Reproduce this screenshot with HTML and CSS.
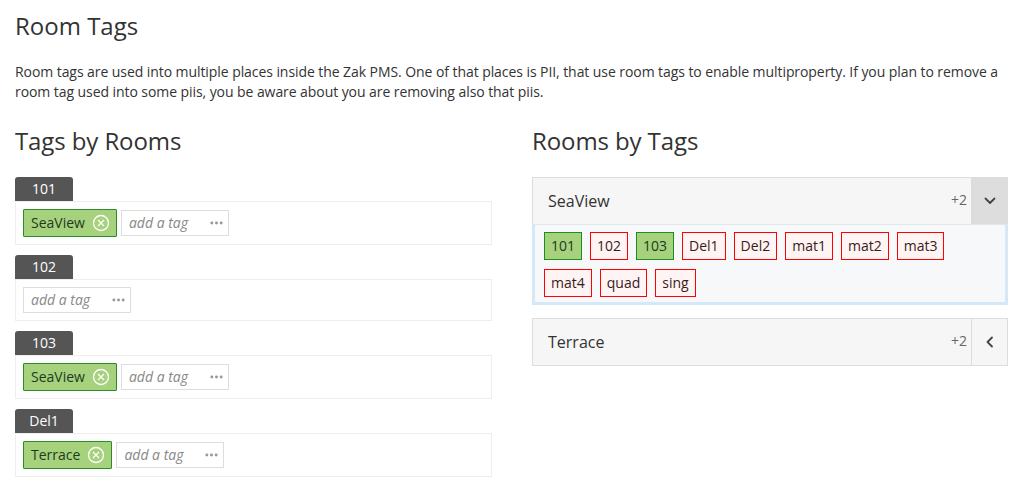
FILE: index.html
```html
<!DOCTYPE html>
<html>
<head>
<meta charset="utf-8">
<link rel="stylesheet" href="styles.css">
</head>
<body>
<div class="page">
  <h1 class="title">Room Tags</h1>
  <p class="intro">Room tags are used into multiple places inside the Zak PMS. One of that places is PII, that use room tags to enable multiproperty. If you plan to remove a room tag used into some piis, you be aware about you are removing also that piis.</p>
  <div class="cols">
    <section class="col">
      <h2 class="subtitle">Tags by Rooms</h2>
      <div class="room">
        <div class="room-label">101</div>
        <div class="room-row">
          <span class="tag">SeaView<svg class="x" viewBox="0 0 18 18"><circle cx="9" cy="9" r="7.5"/><path d="M6 6l6 6M12 6l-6 6"/></svg></span>
          <span class="add"><span class="ph">add a tag</span><svg class="dots" viewBox="0 0 14 4"><circle cx="2" cy="2" r="1.6"/><circle cx="7" cy="2" r="1.6"/><circle cx="12" cy="2" r="1.6"/></svg></span>
        </div>
      </div>
      <div class="room">
        <div class="room-label">102</div>
        <div class="room-row">
          <span class="add"><span class="ph">add a tag</span><svg class="dots" viewBox="0 0 14 4"><circle cx="2" cy="2" r="1.6"/><circle cx="7" cy="2" r="1.6"/><circle cx="12" cy="2" r="1.6"/></svg></span>
        </div>
      </div>
      <div class="room">
        <div class="room-label">103</div>
        <div class="room-row">
          <span class="tag">SeaView<svg class="x" viewBox="0 0 18 18"><circle cx="9" cy="9" r="7.5"/><path d="M6 6l6 6M12 6l-6 6"/></svg></span>
          <span class="add"><span class="ph">add a tag</span><svg class="dots" viewBox="0 0 14 4"><circle cx="2" cy="2" r="1.6"/><circle cx="7" cy="2" r="1.6"/><circle cx="12" cy="2" r="1.6"/></svg></span>
        </div>
      </div>
      <div class="room">
        <div class="room-label">Del1</div>
        <div class="room-row">
          <span class="tag">Terrace<svg class="x" viewBox="0 0 18 18"><circle cx="9" cy="9" r="7.5"/><path d="M6 6l6 6M12 6l-6 6"/></svg></span>
          <span class="add"><span class="ph">add a tag</span><svg class="dots" viewBox="0 0 14 4"><circle cx="2" cy="2" r="1.6"/><circle cx="7" cy="2" r="1.6"/><circle cx="12" cy="2" r="1.6"/></svg></span>
        </div>
      </div>
    </section>
    <section class="col">
      <h2 class="subtitle">Rooms by Tags</h2>
      <div class="panel open">
        <div class="panel-head">
          <span class="panel-name">SeaView</span>
          <span class="count">+2</span>
          <span class="toggle active"><svg viewBox="0 0 12 8"><path d="M1.5 1.5l4.5 4.5 4.5-4.5"/></svg></span>
        </div>
        <div class="panel-body">
          <span class="rt on">101</span>
          <span class="rt">102</span>
          <span class="rt on">103</span>
          <span class="rt">Del1</span>
          <span class="rt">Del2</span>
          <span class="rt">mat1</span>
          <span class="rt">mat2</span>
          <span class="rt">mat3</span>
          <span class="rt">mat4</span>
          <span class="rt">quad</span>
          <span class="rt">sing</span>
        </div>
      </div>
      <div class="panel">
        <div class="panel-head">
          <span class="panel-name">Terrace</span>
          <span class="count">+2</span>
          <span class="toggle"><svg viewBox="0 0 8 12"><path d="M6 1.5l-4.5 4.5 4.5 4.5"/></svg></span>
        </div>
      </div>
    </section>
  </div>
</div>
</body>
</html>
```
FILE: styles.css
```css
* { box-sizing: border-box; }
html, body { margin: 0; padding: 0; background: #fff; }
body {
  font-family: "Open Sans", "Liberation Sans", sans-serif;
  font-size: 14px;
  line-height: 20px;
  color: #333;
}
.page { padding: 0 12px 0 15px; }
.title {
  font-size: 24px;
  font-weight: 400;
  line-height: 26px;
  margin: 13px 0 23px;
}
.intro { margin: 0 0 26px; letter-spacing: -0.07px; }
.cols {
  display: grid;
  grid-template-columns: 477px 476px;
  column-gap: 40px;
}
.subtitle {
  font-size: 24px;
  font-weight: 400;
  line-height: 26px;
  margin: 0 0 23px;
  letter-spacing: -0.1px;
}
.room { margin-bottom: 10px; }
.room-label {
  width: 58px;
  height: 24px;
  line-height: 23px;
  background: #555;
  color: #fff;
  text-align: center;
  border-radius: 3px 3px 0 0;
}
.room-row {
  border: 1px solid #eee;
  padding: 7px;
  display: flex;
  align-items: center;
  gap: 4px;
}
.tag {
  display: inline-flex;
  align-items: center;
  height: 28px;
  padding: 0 6px 0 7px;
  background: #a6d27d;
  border: 1px solid #2a8c2a;
  border-radius: 1px;
  color: #1e3a1e;
}
.tag .x {
  width: 18px;
  height: 18px;
  margin-left: 7px;
  fill: none;
  stroke: #fff;
  stroke-width: 1.3;
}
.add {
  display: inline-flex;
  align-items: center;
  justify-content: space-between;
  width: 108px;
  height: 26px;
  border: 1px solid #ddd;
  padding: 0 5px 0 7px;
}
.ph { font-style: italic; color: #888; }
.dots { width: 13px; height: 4px; fill: #999; }
.panel {
  border: 1px solid #ddd;
  margin-bottom: 13px;
}
.panel.open { border-bottom: none; }
.panel-head {
  display: flex;
  align-items: stretch;
  height: 46px;
  background: #f6f6f6;
}
.panel-name {
  flex: 1;
  font-size: 16px;
  line-height: 46px;
  padding-left: 15px;
}
.count {
  font-size: 14px;
  color: #666;
  line-height: 44px;
  padding-right: 4px;
}
.toggle {
  width: 36px;
  display: flex;
  align-items: center;
  justify-content: center;
  border-left: 1px solid #ddd;
}
.toggle.active { background: #ddd; border-left-color: #ddd; }
.toggle svg {
  fill: none;
  stroke: #444;
  stroke-width: 1.8;
  stroke-linecap: round;
  stroke-linejoin: round;
}
.toggle.active svg { width: 12px; height: 8px; }
.toggle:not(.active) svg { width: 8px; height: 12px; }
.panel-body {
  margin: 0 -1px;
  border: 3px solid #d5e8f8;
  border-top: 1px solid #dfe6ee;
  background: #f7f8fa;
  padding: 7px 9px 5px 9px;
  display: flex;
  flex-wrap: wrap;
  gap: 9px 8px;
}
.rt {
  display: inline-block;
  height: 28px;
  line-height: 26px;
  padding: 0 6px;
  border: 1px solid #f00;
  background: #fff4f4;
  color: #3b1a1a;
}
.rt.on {
  border-color: #1e8c1e;
  background: #a6d27d;
  color: #1e3a1e;
}
```
